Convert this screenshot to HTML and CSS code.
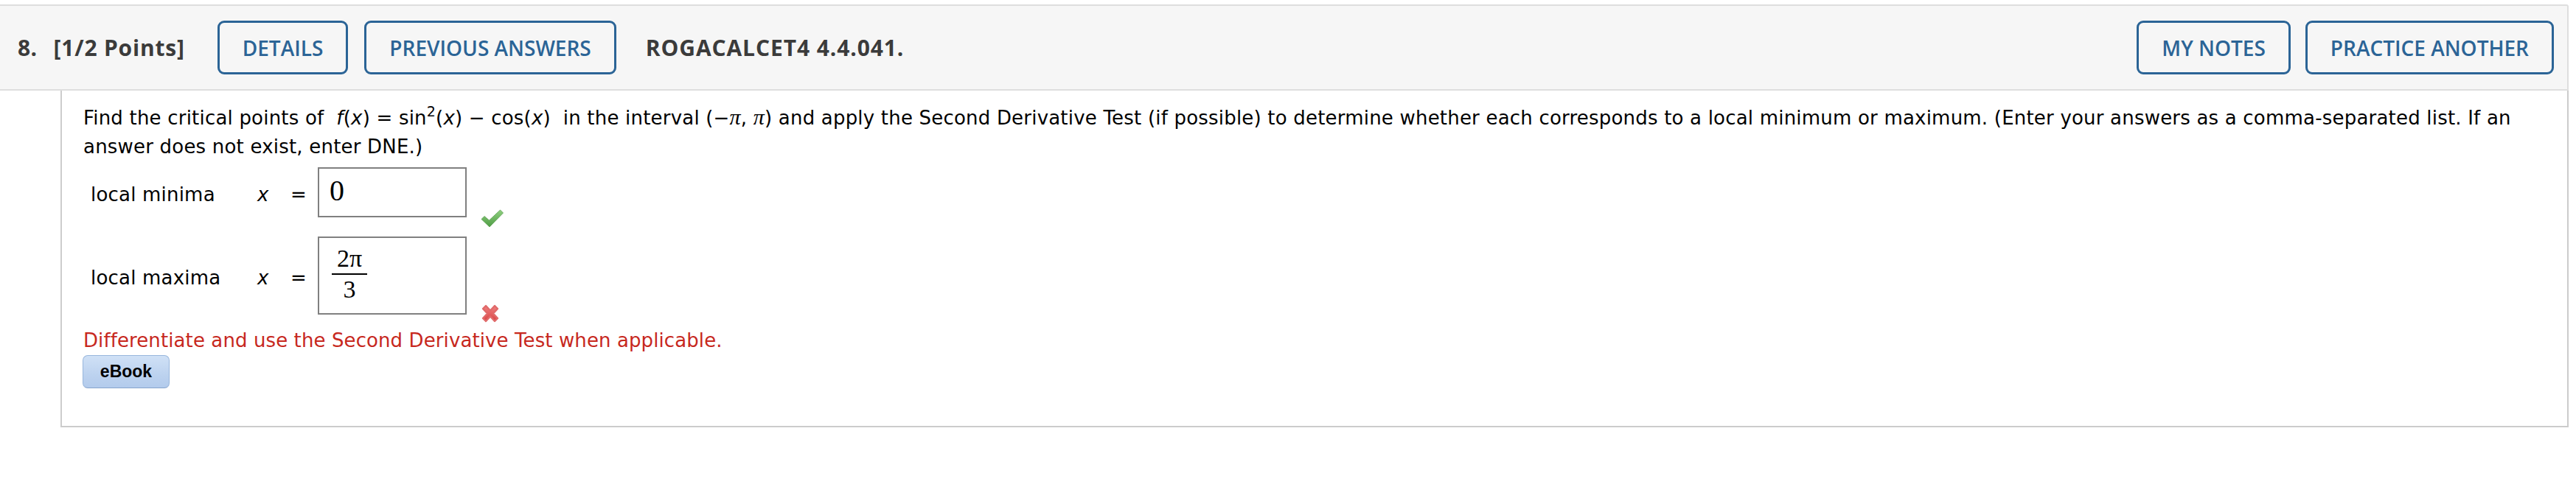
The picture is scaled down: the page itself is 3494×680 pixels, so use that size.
FILE: index.html
```html
<!DOCTYPE html>
<html lang="en">
<head>
<meta charset="utf-8">
<title>Question 8</title>
<link rel="stylesheet" href="styles.css">
</head>
<body>
<div class="page">
  <div class="qhead">
    <span class="qnum">8.</span>
    <span class="qpts">[1/2 Points]</span>
    <button class="hbtn first">DETAILS</button>
    <button class="hbtn">PREVIOUS ANSWERS</button>
    <span class="qcode">ROGACALCET4 4.4.041.</span>
    <div class="hright">
      <button class="hbtn">MY NOTES</button>
      <button class="hbtn">PRACTICE ANOTHER</button>
    </div>
  </div>
  <div class="qbody">
    <p class="prompt">Find the critical points of&nbsp; <span class="m"><i>f</i>(<i>x</i>) = sin<sup>2</sup>(<i>x</i>) − cos(<i>x</i>)</span>&nbsp; in the interval (−<i class="pi">π</i>, <i class="pi">π</i>) and apply the Second Derivative Test (if possible) to determine whether each corresponds to a local minimum or maximum. (Enter your answers as a comma-separated list. If an<br>answer does not exist, enter DNE.)</p>
    <div class="arow">
      <span class="alabel">local minima</span>
      <span class="avar"><i>x</i></span>
      <span class="aeq">=</span>
      <div class="abox small"><span class="aval">0</span></div>
      <svg class="mark check" width="31" height="25" viewBox="0 0 31 25" aria-label="correct">
        <defs>
          <linearGradient id="g1" x1="0" y1="0" x2="0" y2="1">
            <stop offset="0" stop-color="#8fd07f"/>
            <stop offset="1" stop-color="#4f9c45"/>
          </linearGradient>
        </defs>
        <path d="M1 13.5 L5 9.5 L11.5 15 L26.5 1 L30.5 5 L12 24 Z" fill="url(#g1)" stroke="#5a9f50" stroke-width="0.8" stroke-linejoin="round"/>
      </svg>
    </div>
    <div class="arow second">
      <span class="alabel">local maxima</span>
      <span class="avar"><i>x</i></span>
      <span class="aeq">=</span>
      <div class="abox tall">
        <span class="frac"><span class="num">2π</span><span class="den">3</span></span>
      </div>
      <svg class="mark cross" width="26" height="27" viewBox="0 0 26 27" aria-label="incorrect">
        <defs>
          <linearGradient id="g2" x1="0" y1="0" x2="0" y2="1">
            <stop offset="0" stop-color="#f08080"/>
            <stop offset="1" stop-color="#d94444"/>
          </linearGradient>
        </defs>
        <path d="M3 7 L7 3 L13 9.5 L19 3 L23 7 L17 13.5 L23 20 L19 24 L13 17.5 L7 24 L3 20 L9 13.5 Z" fill="url(#g2)" stroke="#e06a6a" stroke-width="2.4" stroke-linejoin="round"/>
      </svg>
    </div>
    <p class="feedback">Differentiate and use the Second Derivative Test when applicable.</p>
    <button class="ebook">eBook</button>
  </div>
</div>
</body>
</html>
```

FILE: styles.css
```css
html, body {
  margin: 0;
  padding: 0;
  background: #ffffff;
}

.page {
  width: 3484px;
  padding-top: 6px;
}

.qhead {
  display: flex;
  align-items: center;
  height: 113px;
  background: #f6f6f6;
  border-top: 2px solid #dedede;
  border-bottom: 2px solid #dedede;
  border-right: 2px solid #dedede;
  border-top-right-radius: 3px;
  padding: 0 18px 0 24px;
  font-family: "Open Sans", "Liberation Sans", sans-serif;
  color: #3b3b3b;
}

.qnum,
.qpts,
.qcode {
  font-size: 30px;
  font-weight: 700;
  letter-spacing: 0.4px;
}

.qnum {
  margin-right: 22px;
}

.qpts {
  letter-spacing: 0.8px;
}

.qcode {
  margin-left: 40px;
  letter-spacing: 0.9px;
}

.hbtn {
  height: 73px;
  padding: 0 31px;
  border: 3px solid #2b6496;
  border-radius: 9px;
  background: #f6f6f6;
  color: #2b6496;
  font-family: "Open Sans", "Liberation Sans", sans-serif;
  font-size: 28px;
  font-weight: 600;
  margin-left: 22px;
  cursor: pointer;
}

.hbtn.first {
  margin-left: 44px;
}

.hright {
  margin-left: auto;
  display: flex;
}

.hright .hbtn:first-child {
  margin-left: 0;
}

.hright .hbtn + .hbtn {
  margin-left: 20px;
}

.qbody {
  margin-left: 82px;
  border: 2px solid #cccccc;
  border-top: none;
  padding: 16px 20px 51px 29px;
  font-family: "DejaVu Sans", Verdana, sans-serif;
  font-size: 26px;
  line-height: 39px;
  letter-spacing: 0.2px;
  color: #000;
}

.prompt {
  margin: 0;
  white-space: nowrap;
}

.prompt sup {
  font-size: 19px;
  line-height: 0;
  vertical-align: 11px;
}

.prompt .pi {
  font-family: "Liberation Serif", serif;
  font-size: 30px;
}

.arow {
  display: flex;
  align-items: center;
  margin-top: 8px;
  padding-left: 10px;
}

.arow.second {
  margin-top: 26px;
}

.alabel {
  width: 226px;
  margin-top: 6px;
}

.avar {
  width: 45px;
  margin-top: 6px;
}

.aeq {
  width: 37px;
  margin-top: 6px;
}

.abox {
  width: 202px;
  box-sizing: border-box;
  border: 2px solid #808080;
  display: flex;
  align-items: center;
  padding-left: 14px;
  font-family: "Liberation Serif", "Times New Roman", serif;
  color: #000;
  letter-spacing: 0;
}

.abox.small {
  height: 68px;
}

.abox.tall {
  height: 106px;
}

.aval {
  font-size: 40px;
  line-height: 40px;
  margin-top: -4px;
}

.frac {
  display: inline-flex;
  flex-direction: column;
  align-items: center;
  margin-left: 3px;
  margin-top: -4px;
  font-size: 34px;
  line-height: 34px;
}

.frac .num {
  padding: 0 7px 3px;
  border-bottom: 2px solid #000;
}

.frac .den {
  padding-top: 3px;
}

.mark {
  align-self: flex-end;
  margin-left: 19px;
}

.mark.check {
  margin-bottom: -14px;
}

.mark.cross {
  margin-bottom: -12px;
}

.feedback {
  margin: 16px 0 0;
  color: #c7281e;
  letter-spacing: 0.1px;
}

.ebook {
  display: block;
  width: 118px;
  height: 45px;
  margin-left: -1px;
  padding: 0;
  border: 1px solid #98b6dc;
  border-bottom-color: #86a4cc;
  border-radius: 7px;
  background: linear-gradient(#d0e1f6, #bcd2ef 60%, #b3cbec);
  font-family: "Liberation Sans", Arial, sans-serif;
  font-weight: 700;
  font-size: 23px;
  letter-spacing: 0;
  color: #000;
  cursor: pointer;
}
```
